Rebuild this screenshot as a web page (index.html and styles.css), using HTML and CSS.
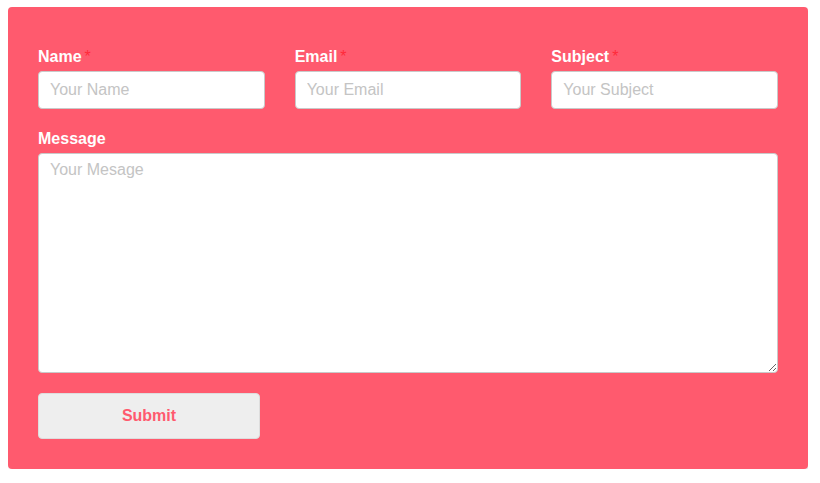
FILE: index.html
```html
<!DOCTYPE html>
<html>
<head>
<meta charset="utf-8">
<link rel="stylesheet" href="styles.css">
</head>
<body>
<form class="card">
  <div class="row">
    <div class="field">
      <label class="label">Name<span class="req">*</span></label>
      <input class="input" type="text" placeholder="Your Name">
    </div>
    <div class="field">
      <label class="label">Email<span class="req">*</span></label>
      <input class="input" type="text" placeholder="Your Email">
    </div>
    <div class="field">
      <label class="label">Subject<span class="req">*</span></label>
      <input class="input" type="text" placeholder="Your Subject">
    </div>
  </div>
  <div class="field message">
    <label class="label">Message</label>
    <textarea class="textarea" placeholder="Your Mesage"></textarea>
  </div>
  <button class="submit" type="button">Submit</button>
</form>
</body>
</html>
```
FILE: styles.css
```css
html, body {
  background: #ffffff;
}
body {
  margin: 7px 12px 14px 8px;
  font-family: "Liberation Sans", Arial, sans-serif;
}
.card {
  background: #ff5a6e;
  border-radius: 4px;
  padding: 40px 30px 30px 30px;
  box-shadow: 6px 6px 14px rgba(0, 0, 0, 0.12);
  display: flex;
  flex-direction: column;
}
.row {
  display: grid;
  grid-template-columns: 1fr 1fr 1fr;
  column-gap: 30px;
}
.field {
  display: flex;
  flex-direction: column;
}
.label {
  color: #ffffff;
  font-weight: bold;
  font-size: 16px;
  line-height: 20px;
  margin-bottom: 4px;
}
.req {
  color: #ff2a3a;
  font-weight: normal;
  margin-left: 3px;
}
.input, .textarea {
  box-sizing: border-box;
  border: 1px solid #c9c9c9;
  border-radius: 4px;
  background: #fff;
  font-family: "Liberation Sans", Arial, sans-serif;
  font-size: 16px;
  color: #333;
  padding: 0 11px;
  outline: none;
}
.input {
  height: 38px;
  width: 100%;
}
.input::placeholder, .textarea::placeholder {
  color: #c4c4c4;
}
.message {
  margin-top: 20px;
}
.textarea {
  height: 220px;
  padding-top: 7px;
  resize: vertical;
  display: block;
}
.submit {
  margin-top: 20px;
  width: 222px;
  height: 46px;
  background: #eeeeee;
  border: 1px solid #dddddd;
  border-radius: 4px;
  color: #ff5a6e;
  font-family: "Liberation Sans", Arial, sans-serif;
  font-weight: bold;
  font-size: 16px;
  cursor: pointer;
}
```
